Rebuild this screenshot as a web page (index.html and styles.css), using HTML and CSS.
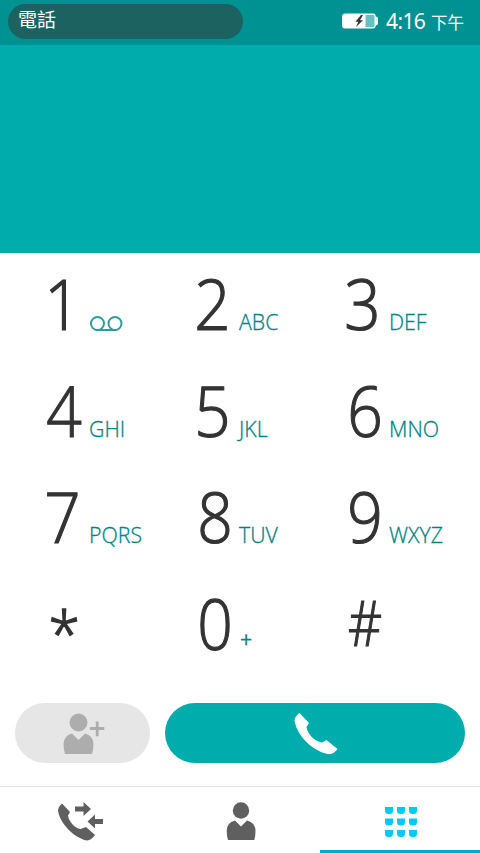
FILE: index.html
```html
<!DOCTYPE html>
<html lang="zh-Hant">
<head>
<meta charset="utf-8">
<title>電話</title>
<link rel="stylesheet" href="styles.css">
</head>
<body>
<div class="phone">
  <header class="status">
    <div class="app-title">電話</div>
    <div class="indicators">
      <svg class="battery" width="38" height="18" viewBox="0 0 38 18"><path fill="#fff" d="M4 1.500h28q2.500 0 2.700 3 2.300 0 2.300 2v5q0 2-2.300 2-.2 3-2.700 3H4q-3 0-3-3.500V5q0-3.500 3-3.500z"/><path fill="#66c1c0" d="M24.500 3h8q1 0 1 1.500v9q0 1.500-1 1.500h-8z"/><path fill="#333" d="M20 3l-5.500 6.800h2.800L15 15l7-6.800h-3L22 3z"/></svg>
      <span class="time">4:16</span><span class="ampm">下午</span>
    </div>
  </header>
  <section class="display"></section>
  <main class="keypad">
    <div class="key"><span class="digit left">1</span><svg class="voicemail" width="36" height="20" viewBox="0 0 36 20"><g fill="none" stroke="#2e9c9b" stroke-width="2"><circle cx="8.500" cy="9.500" r="6.500"/><circle cx="26" cy="9.500" r="6.500"/><path d="M7 16h20"/></g></svg></div>
    <div class="key"><span class="digit left">2</span><span class="letters">ABC</span></div>
    <div class="key"><span class="digit left">3</span><span class="letters">DEF</span></div>
    <div class="key"><span class="digit">4</span><span class="letters">GHI</span></div>
    <div class="key"><span class="digit left">5</span><span class="letters">JKL</span></div>
    <div class="key"><span class="digit right">6</span><span class="letters">MNO</span></div>
    <div class="key"><span class="digit left">7</span><span class="letters">PQRS</span></div>
    <div class="key"><span class="digit right">8</span><span class="letters">TUV</span></div>
    <div class="key"><span class="digit right">9</span><span class="letters">WXYZ</span></div>
    <div class="key"><span class="digit star">*</span></div>
    <div class="key"><span class="digit right">0</span><span class="letters plus">+</span></div>
    <div class="key"><span class="digit hash">#</span></div>
  </main>
  <div class="actions">
    <button class="add" aria-label="add"><svg width="45" height="45" viewBox="0 0 45 45"><g fill="#adadad"><circle cx="18.500" cy="11.500" r="9"/><path d="M12 22.500l6.500 6.500 6.500-6.500q8.500 2.500 8.500 10.500 0 5-1.500 10H5q-1.500-5-1.500-10 0-8 8.500-10.500zM35.800 10.500h2.800v5.600h5.700v2.800h-5.700v6.300h-2.800v-6.300h-6v-2.800h6z"/></g></svg></button>
    <button class="call" aria-label="call"><svg width="45" height="45" viewBox="0 0 45 45"><path fill="#fff" d="M6.500 2l9.500 10-2.500 4c1 7 8 14.500 15.500 15.500l4.500-2.500L44.500 38q-3.500 4.800-8 5.300C22 41.500 4 26 1.500 9.500Q2 5 6.500 2z"/></svg></button>
  </div>
  <nav class="tabs">
    <div class="tab"><svg width="46" height="40" viewBox="0 0 46 40"><g fill="#5f5f5f"><path d="M5 1.500l8 8.500-2 3.500c1 6.500 6.500 12.500 12.500 13.500l5.500-2 9 8q-3.500 5-8 5.500C17 36 2.500 21 1 8.500 1 5 5 1.500 5 1.500zM18 4.500h8.500V0L34 7l-7.500 7V9.500H18zM46 17h-8v-4.500L30.500 19.500l7.500 7V22h8z"/></g></svg></div>
    <div class="tab"><svg class="contact" width="30" height="40" viewBox="0 0 30 40"><g fill="#5f5f5f"><circle cx="15" cy="8.500" r="8.200"/><path d="M9 18.500l6 6 6-6q8.500 2 8.500 10.500 0 5-1.200 9H2Q.7 34 .7 29 .7 20.500 9 18.500z"/></g></svg></div>
    <div class="tab active"><svg class="grid" width="32" height="32" viewBox="0 0 32 32"><defs><path id="dot" d="M0 0h8v3.500Q8 7 4.500 7h-1Q0 7 0 3.500z"/></defs><g fill="#00caf5"><use href="#dot"/><use href="#dot" x="12"/><use href="#dot" x="24"/><use href="#dot" y="11.500"/><use href="#dot" x="12" y="11.500"/><use href="#dot" x="24" y="11.500"/><use href="#dot" y="23"/><use href="#dot" x="12" y="23"/><use href="#dot" x="24" y="23"/></g></svg></div>
  </nav>
</div>
</body>
</html>
```
FILE: styles.css
```css
* { box-sizing: border-box; }
body { margin: 0; font-family: "Open Sans", "Noto Sans", "Noto Sans CJK TC", sans-serif; }
.phone { width: 480px; height: 853px; background: #fff; display: flex; flex-direction: column; overflow: hidden; }
.status { height: 45px; flex: none; background: #009292; display: flex; justify-content: space-between; padding: 4px 16px 0 8px; color: #fff; }
.app-title { width: 235px; height: 35px; border-radius: 18px; background: #1b6261; padding-left: 10px; font: 19px/30px "Noto Sans CJK TC", sans-serif; }
.indicators { display: flex; height: 35px; align-items: baseline; line-height: 34px; }
.battery { align-self: flex-start; margin: 8px 7px 0 0; }
.time { font-family: "Noto Sans", sans-serif; font-size: 21px; width: 45px; white-space: nowrap; letter-spacing: -.6px; }
.ampm { font-family: "Noto Sans CJK TC", sans-serif; font-size: 16.500px; }
.display { height: 208px; flex: none; background: #00adad; }
.keypad { height: 427px; flex: none; display: grid; grid-template-columns: repeat(3, 150px); grid-template-rows: repeat(4, 106.700px); padding: 0 15px; }
.key { display: flex; align-items: baseline; padding-left: 28px; }
.digit { width: 46px; flex: none; font-size: 70px; line-height: 100px; font-weight: 300; color: #333; -webkit-text-stroke: 1.200px #333; transform: translateX(1px) scaleX(.89); transform-origin: 20px 50%; }
.left { transform: translateX(-.5px) scaleX(.91); }
.right { transform: translateX(2px) scaleX(.89); }
.star { font-size: 62px; line-height: 120px; transform: translateX(4px) scaleX(.92); -webkit-text-stroke-width: 1.500px; }
.hash { font-size: 62px; line-height: 99px; transform: translateX(2px) scaleX(.85); }
.letters { font-size: 21.300px; line-height: 30px; font-weight: 300; color: #008484; white-space: nowrap; -webkit-text-stroke: .3px #008484; }
.voicemail { align-self: flex-start; margin-top: 61px; }
.plus { font-weight: 400; transform: translate(1px, -3px); }
.actions { height: 106px; flex: none; display: flex; gap: 15px; padding: 23px 15px; }
.actions button { border: 0; border-radius: 30px; height: 60px; padding: 0; display: flex; align-items: center; justify-content: center; }
.add { width: 135px; background: #e6e6e6; }
.call { width: 300px; background: #00adad; }
.tabs { height: 67px; flex: none; display: grid; grid-template-columns: repeat(3, 160px); border-top: 1px solid #e4e4e4; }
.tab { display: flex; align-items: center; justify-content: center; padding-top: 3px; }
.contact { margin-left: 1px; }
.grid { margin: 6px 0 0 2px; }
.active { border-bottom: 3px solid #00aacb; }
```
